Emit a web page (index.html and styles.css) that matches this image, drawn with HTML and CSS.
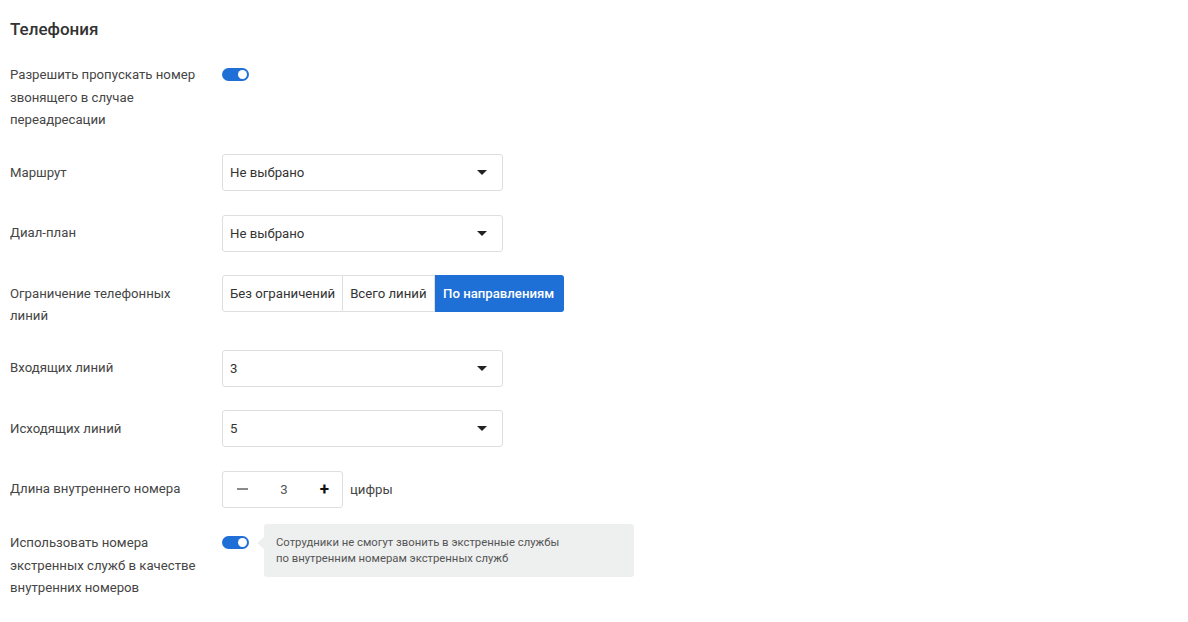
FILE: index.html
```html
<!DOCTYPE html>
<html lang="ru">
<head>
    <meta charset="UTF-8">
    <meta name="viewport" content="width=device-width, initial-scale=1.0">
    <title>Телефония</title>
    <link rel="stylesheet" href="styles.css">
</head>
<body>

    <section class="settings">
        <h2 class="settings-title">Телефония</h2>

        <!-- Caller ID on forward -->
        <div class="row">
            <div class="label">Разрешить пропускать номер звонящего в случае переадресации</div>
            <div class="control control-toggle">
                <span class="toggle on"><span class="knob"></span></span>
            </div>
        </div>

        <!-- Route -->
        <div class="row">
            <div class="label label-field">Маршрут</div>
            <div class="control">
                <div class="select">
                    <span>Не выбрано</span>
                    <span class="caret"></span>
                </div>
            </div>
        </div>

        <!-- Dial plan -->
        <div class="row">
            <div class="label label-field">Диал-план</div>
            <div class="control">
                <div class="select">
                    <span>Не выбрано</span>
                    <span class="caret"></span>
                </div>
            </div>
        </div>

        <!-- Line limit -->
        <div class="row">
            <div class="label label-field">Ограничение телефонных линий</div>
            <div class="control">
                <div class="segmented">
                    <span class="segment">Без ограничений</span>
                    <span class="segment">Всего линий</span>
                    <span class="segment active">По направлениям</span>
                </div>
            </div>
        </div>

        <!-- Incoming lines -->
        <div class="row">
            <div class="label label-field">Входящих линий</div>
            <div class="control">
                <div class="select">
                    <span>3</span>
                    <span class="caret"></span>
                </div>
            </div>
        </div>

        <!-- Outgoing lines -->
        <div class="row">
            <div class="label label-field">Исходящих линий</div>
            <div class="control">
                <div class="select">
                    <span>5</span>
                    <span class="caret"></span>
                </div>
            </div>
        </div>

        <!-- Extension length -->
        <div class="row">
            <div class="label label-field">Длина внутреннего номера</div>
            <div class="control control-inline">
                <div class="stepper">
                    <span class="minus"></span>
                    <span class="step-value">3</span>
                    <span class="plus">+</span>
                </div>
                <span class="suffix">цифры</span>
            </div>
        </div>

        <!-- Emergency numbers -->
        <div class="row">
            <div class="label">Использовать номера экстренных служб в качестве внутренних номеров</div>
            <div class="control control-toggle has-hint">
                <span class="toggle on"><span class="knob"></span></span>
                <div class="hint">
                    Сотрудники не смогут звонить в экстренные службы<br>
                    по внутренним номерам экстренных служб
                </div>
            </div>
        </div>
    </section>

</body>
</html>
```

FILE: styles.css
```css
body {
    margin: 0;
    font-family: Roboto, "Noto Sans", Arial, sans-serif;
    font-size: 13.2px;
    color: #444;
    background: #fff;
}
.settings {
    padding: 17px 10px 20px;
}
.settings-title {
    margin: 0 0 22px;
    font-size: 17px;
    line-height: 24px;
    font-weight: 500;
    color: #333;
}
.row {
    display: flex;
    align-items: flex-start;
    margin-bottom: 23.5px;
}
.label {
    width: 192px;
    margin-right: 20px;
    padding-top: 1px;
    margin-bottom: -1px;
    line-height: 22.5px;
    color: #454545;
}
.label-field {
    padding-top: 7.5px;
    margin-bottom: -1.5px;
}
.control-toggle {
    padding-top: 5px;
}
.control-inline {
    display: flex;
    align-items: center;
    gap: 7px;
}
.has-hint {
    position: relative;
}

/* toggle */
.toggle {
    display: block;
    width: 27px;
    height: 13px;
    border-radius: 7px;
    background: #c9ccd1;
    position: relative;
}
.toggle.on {
    background: #1f6fd6;
}
.knob {
    position: absolute;
    top: 2px;
    left: 2px;
    width: 9px;
    height: 9px;
    border-radius: 50%;
    background: #fff;
}
.toggle.on .knob {
    left: 16px;
}

/* select */
.select {
    box-sizing: border-box;
    width: 281px;
    height: 37px;
    padding: 0 15px 0 7px;
    border: 1px solid #dedede;
    border-radius: 3px;
    display: flex;
    align-items: center;
    justify-content: space-between;
    color: #333;
}
.caret {
    width: 0;
    height: 0;
    border-left: 5px solid transparent;
    border-right: 5px solid transparent;
    border-top: 5px solid #222;
}

/* segmented buttons */
.segmented {
    display: flex;
    height: 37px;
}
.segment {
    display: flex;
    align-items: center;
    padding: 0 7px;
    border: 1px solid #dedede;
    border-left: none;
    color: #333;
}
.segment:first-child {
    border-left: 1px solid #dedede;
    border-radius: 3px 0 0 3px;
}
.segment.active {
    padding: 0 8.5px;
    background: #1e6fd6;
    border-color: #1e6fd6;
    color: #fff;
    font-weight: 500;
    border-radius: 0 3px 3px 0;
}

/* stepper */
.stepper {
    box-sizing: border-box;
    width: 121px;
    height: 37px;
    border: 1px solid #dedede;
    border-radius: 3px;
    display: flex;
    align-items: center;
    justify-content: space-between;
    padding: 0 13px 0 14px;
}
.minus {
    width: 11px;
    height: 1.5px;
    background: #8a8a8a;
}
.plus {
    font-size: 17px;
    line-height: 1;
    color: #111;
    font-weight: 700;
}
.step-value {
    color: #555;
}
.suffix {
    color: #444;
}

/* hint popover */
.hint {
    position: absolute;
    left: 42px;
    top: -7px;
    width: 346px;
    padding: 11px 12px 10px;
    background: #eeefef;
    border-radius: 3px;
    font-size: 11.3px;
    line-height: 16px;
    color: #555;
    white-space: nowrap;
}
.hint::before {
    content: "";
    position: absolute;
    left: -7px;
    top: 13px;
    border-top: 6px solid transparent;
    border-bottom: 6px solid transparent;
    border-right: 7px solid #eeefef;
}
```
